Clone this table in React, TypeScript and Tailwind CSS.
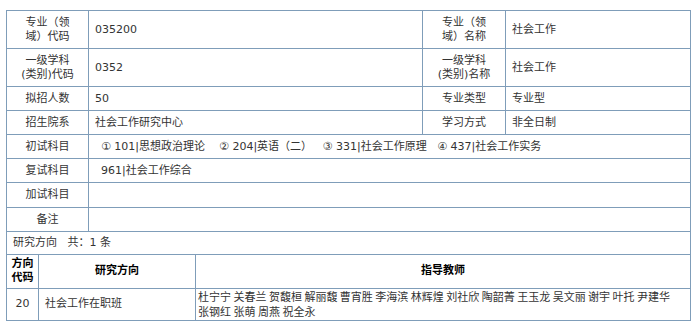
import React from "react";

const cell = "border border-[#7f9db9] p-0 align-middle";
const label = `${cell} text-center leading-[14px]`;
const val = `${cell} text-left pl-[6px] leading-[14px]`;

export default function App() {
  return (
    <div className="w-[700px] h-[328px] bg-white pt-[10px] pl-[6px] text-[11px] text-[#333] font-[family-name:DejaVu_Sans,Noto_Sans_CJK_SC,sans-serif]">
      <table className="border-collapse table-fixed w-[684px]">
        <colgroup>
          <col className="w-[82px]" />
          <col className="w-[334px]" />
          <col className="w-[83px]" />
          <col className="w-[185px]" />
        </colgroup>
        <tbody>
          <tr className="h-[38px]">
            <td className={label}>专业（领<br />域）代码</td>
            <td className={val}>035200</td>
            <td className={label}>专业（领<br />域）名称</td>
            <td className={val}>社会工作</td>
          </tr>
          <tr className="h-[38px]">
            <td className={label}>一级学科<br />(类别)代码</td>
            <td className={val}>0352</td>
            <td className={label}>一级学科<br />(类别)名称</td>
            <td className={val}>社会工作</td>
          </tr>
          <tr className="h-[24px]">
            <td className={label}>拟招人数</td>
            <td className={val}>50</td>
            <td className={label}>专业类型</td>
            <td className={val}>专业型</td>
          </tr>
          <tr className="h-[24px]">
            <td className={label}>招生院系</td>
            <td className={val}>社会工作研究中心</td>
            <td className={label}>学习方式</td>
            <td className={val}>非全日制</td>
          </tr>
          <tr className="h-[24px]">
            <td className={label}>初试科目</td>
            <td className={`${val} pl-[12px] whitespace-nowrap`} colSpan={3}>
              ① 101|思想政治理论&nbsp;&nbsp;&nbsp;&nbsp;② 204|英语（二）&nbsp;&nbsp;&nbsp;③ 331|社会工作原理&nbsp;&nbsp;&nbsp;④ 437|社会工作实务
            </td>
          </tr>
          <tr className="h-[24px]">
            <td className={label}>复试科目</td>
            <td className={`${val} pl-[12px]`} colSpan={3}>961|社会工作综合</td>
          </tr>
          <tr className="h-[25px]">
            <td className={label}>加试科目</td>
            <td className={val} colSpan={3}></td>
          </tr>
          <tr className="h-[24px]">
            <td className={label}>备注</td>
            <td className={val} colSpan={3}></td>
          </tr>
          <tr className="h-[23px]">
            <td className={val} colSpan={4}>
              研究方向&nbsp;&nbsp;&nbsp;共：1 条
            </td>
          </tr>
        </tbody>
      </table>
      <table className="border-collapse table-fixed w-[684px]">
        <colgroup>
          <col className="w-[32px]" />
          <col className="w-[157px]" />
          <col className="w-[495px]" />
        </colgroup>
        <tbody>
          <tr className="h-[33px]">
            <td className={`${label} border-t-0 font-bold text-black`}>方向<br />代码</td>
            <td className={`${label} border-t-0 font-bold text-black`}>研究方向</td>
            <td className={`${label} border-t-0 font-bold text-black`}>指导教师</td>
          </tr>
          <tr className="h-[32px]">
            <td className={label}>20</td>
            <td className={`${val} pl-[3px]`}>社会工作在职班</td>
            <td className={`${cell} text-left pl-[2px] leading-[15px] font-[family-name:Noto_Sans_CJK_SC,sans-serif]`}>
              杜宁宁 关春兰 贺馥桓 解丽馥 曹宵胜 李海滨 林辉煌 刘社欣 陶韶菁 王玉龙 吴文丽 谢宇 叶托 尹建华<br />
              张钢红 张萌 周燕 祝全永
            </td>
          </tr>
        </tbody>
      </table>
    </div>
  );
}
